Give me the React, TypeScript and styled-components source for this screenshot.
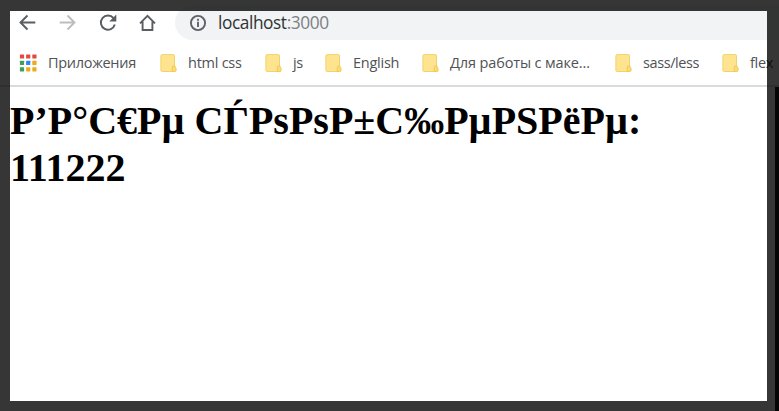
import React from "react";
import styled, { createGlobalStyle } from "styled-components";

const GlobalStyle = createGlobalStyle`
  * { box-sizing: border-box; }
  body { margin: 0; background: #fff; overflow: hidden; }
`;

const Window = styled.div`
  position: relative;
  width: 779px;
  height: 411px;
  overflow: hidden;
  display: flex;
  flex-direction: column;
  background: #fff;
`;

const Frame = styled.div`
  position: absolute;
  inset: 0;
  border: solid rgba(0, 0, 0, 0.79);
  border-width: 11px 12px 10px 10px;
  pointer-events: none;
`;

const EdgeStrip = styled.div`
  position: absolute;
  right: 0;
  top: 87px;
  bottom: 0;
  width: 4px;
  background: #050505;
`;

const Toolbar = styled.div`
  display: flex;
  flex: none;
  align-items: center;
  height: 45px;
  padding: 0 0 5px 18px;
`;

const NavButton = styled.button<{ $muted?: boolean }>`
  display: flex;
  width: 20px;
  height: 20px;
  margin: 2px 20px 0 0;
  padding: 0;
  border: 0;
  background: none;
  color: ${(p) => (p.$muted ? "#bbbdbf" : "#5a5d61")};

  svg {
    flex: none;
  }
`;

const AddressBar = styled.div`
  display: flex;
  flex: 1;
  align-items: center;
  height: 35px;
  margin: 5px -30px 0 -3px;
  padding: 0 0 0 14px;
  border-radius: 18px;
  background: #f1f3f4;
  color: #5f6368;
`;

const Address = styled.span`
  margin-left: 11px;
  font: 17.3px/24px "Open Sans", sans-serif;
  letter-spacing: -0.42px;
  color: #7d8084;
  white-space: nowrap;
`;

const Host = styled.span`
  color: #303235;
`;

const Bookmarks = styled.div`
  display: flex;
  flex: none;
  height: 42px;
  padding: 7px 0 0 19px;
  border-bottom: 2px solid #dadbdc;
`;

const Bookmark = styled.div<{ $width: number }>`
  display: flex;
  flex: none;
  gap: 11px;
  width: ${(p) => p.$width}px;
  height: 22px;
  align-items: center;
  white-space: nowrap;
`;

const Label = styled.span<{ $spacing: number }>`
  font: 14.5px/22px "Open Sans", sans-serif;
  letter-spacing: ${(p) => p.$spacing}px;
  color: #505255;
`;

const Page = styled.main`
  flex: 1;
  padding: 10px 20px 0 10px;
`;

const Message = styled.h1`
  margin: 0;
  font: bold 40px/47px "Liberation Serif", "Times New Roman", serif;
  color: #000;
`;

const stroke = { fill: "none", stroke: "currentColor", strokeWidth: 1.9 };

const Back = () => (
  <svg width="20" height="22" viewBox="0 0 20 22" {...stroke}>
    <path d="M17.3 11.5H3M9.5 4.5l-7 7 7 7" />
  </svg>
);
const Forward = () => (
  <svg width="20" height="22" viewBox="0 0 20 22" {...stroke}>
    <path d="M1.7 11.5H16M9.5 4.5l7 7-7 7" />
  </svg>
);
const Reload = () => (
  <svg width="20" height="22" viewBox="0 0 20 22" {...stroke}>
    <path d="M15.5 7.2A7.1 7.1 0 1 0 16.8 13.5" />
    <path d="M18.3 3.5v7h-7z" fill="currentColor" stroke="none" />
  </svg>
);
const Home = () => (
  <svg width="20" height="22" viewBox="0 0 20 22" {...stroke}>
    <path d="M2 12.3l7.5-7.5 7.5 7.5M4.6 10.5v8.5h9.8v-8.5" />
  </svg>
);
const Info = () => (
  <svg width="18" height="18" viewBox="0 0 18 18" {...stroke}>
    <circle cx="9" cy="9" r="7.1" />
    <path d="M9 7.8v5.3M9 4.8v1.9" />
  </svg>
);

const dots = ["#e24a40", "#e24a40", "#e24a40", "#3c9f5d", "#2f86ec", "#f0a91c", "#3c9f5d", "#f0a91c", "#f0a91c"];

const Apps = () => (
  <svg width="18" height="18" viewBox="0 0 18 18">
    {dots.map((c, i) => (
      <rect key={i} x={0.9 + (i % 3) * 6.2} y={0.4 + Math.floor(i / 3) * 6.4} width="4.2" height="4.2" rx=".4" fill={c} />
    ))}
  </svg>
);

const Folder = () => (
  <svg width="17" height="20" viewBox="0 0 17 20">
    <rect x=".9" y="1.6" width="13.6" height="16.9" rx="1.3" fill="#ffe490" stroke="#f1d26c" />
    <path d="M12.3 18.6v-4.2q0-1.6 1.5-1.6t1.5 1.3q.8.3.8 1.5v1.8q0 1.2-1.3 1.2z" fill="#fbdc75" stroke="#ecc44a" strokeWidth=".8" />
  </svg>
);

const folders = [
  { name: "html css", width: 105, spacing: -0.25 },
  { name: "js", width: 60, spacing: -0.3 },
  { name: "English", width: 97, spacing: -0.25 },
  { name: "Для работы с маке…", width: 193, spacing: -0.13 },
  { name: "sass/less", width: 107, spacing: -0.4 },
  { name: "flex", width: 60, spacing: -0.3 },
];

export default function App() {
  return (
    <>
      <GlobalStyle />
      <Window>
        <Toolbar>
          <NavButton aria-label="Back"><Back /></NavButton>
          <NavButton aria-label="Forward" $muted><Forward /></NavButton>
          <NavButton aria-label="Reload"><Reload /></NavButton>
          <NavButton aria-label="Home"><Home /></NavButton>
          <AddressBar>
            <Info />
            <Address><Host>localhost</Host>:3000</Address>
          </AddressBar>
        </Toolbar>
        <Bookmarks>
          <Bookmark $width={141}>
            <Apps />
            <Label $spacing={-0.3}>Приложения</Label>
          </Bookmark>
          {folders.map((f) => (
            <Bookmark key={f.name} $width={f.width}>
              <Folder />
              <Label $spacing={f.spacing}>{f.name}</Label>
            </Bookmark>
          ))}
        </Bookmarks>
        <Page>
          <Message>Р’Р°С€Рµ СЃРѕРѕР±С‰РµРЅРёРµ: 111222</Message>
        </Page>
        <Frame />
        <EdgeStrip />
      </Window>
    </>
  );
}
